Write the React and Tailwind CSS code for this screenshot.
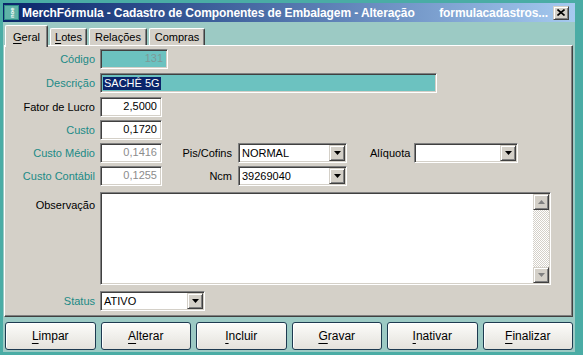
import React from "react";

const sunken =
  "border border-t-[#808080] border-l-[#808080] border-b-white border-r-white shadow-[inset_1px_1px_0_#404040,inset_-1px_-1px_0_#d4d0c8]";
const raised =
  "border border-t-[#d4d0c8] border-l-[#d4d0c8] border-b-[#404040] border-r-[#404040] shadow-[inset_1px_1px_0_#ffffff,inset_-1px_-1px_0_#808080] bg-[#d4d0c8]";

function Arrow({ up = false, color = "#000" }) {
  return (
    <svg width="7" height="4" viewBox="0 0 7 4">
      {up ? (
        <path d="M3.5 0L7 4H0z" fill={color} />
      ) : (
        <path d="M0 0h7L3.5 4z" fill={color} />
      )}
    </svg>
  );
}

function Combo({ className, value }) {
  return (
    <div className={`${sunken} ${className} bg-white h-[20px] p-[1px] flex`}>
      <div className="flex-1 pl-[2px] leading-[16px] text-black truncate">{value}</div>
      <div className={`${raised} w-[16px] flex items-center justify-center`}>
        <Arrow />
      </div>
    </div>
  );
}

function Label({ children, teal }) {
  return (
    <div className={`w-[89px] text-right ${teal ? "text-[#208a86]" : "text-black"}`}>
      {children}
    </div>
  );
}

function Btn({ first, rest }) {
  return (
    <div className="flex-1 h-[28px] rounded-[3px] border border-[#1d3a50] bg-gradient-to-b from-[#fcfcfa] to-[#e4e2dc] shadow-[inset_1px_1px_0_#ffffff] flex items-center justify-center text-[12px] text-black">
      <span>
        <span className="underline underline-offset-[3px]">{first}</span>
        {rest}
      </span>
    </div>
  );
}

export default function App() {
  return (
    <div className="w-[583px] h-[355px] bg-[#4aaca5] pt-[3px] pl-[3px] pr-[8px] pb-[3px] flex flex-col [font-family:'Liberation_Sans',Arial,sans-serif] text-[11px] overflow-hidden">
      {/* title bar */}
      <div className="h-[19px] bg-gradient-to-r from-[#0a246a] to-[#a6caf0] flex items-center text-white font-bold text-[12px] tracking-[-0.1px]">
        <svg width="15" height="15" viewBox="0 0 15 15" className="ml-[1px] shrink-0">
          <rect x="0" y="0" width="15" height="15" fill="#2f8f88" />
          <rect x="1" y="1" width="13" height="13" fill="#5fb3a8" />
          <text
            x="0"
            y="0"
            fontSize="6"
            fill="#ffffff"
            fontFamily="Liberation Sans, sans-serif"
            transform="translate(10 13) rotate(-90)"
          >
            noe
          </text>
        </svg>
        <div className="ml-[3px] whitespace-nowrap">
          MerchFórmula - Cadastro de Componentes de Embalagem - Alteração
        </div>
        <div className="flex-1" />
        <div className="whitespace-nowrap">formulacadastros...</div>
        <div className={`${raised} ml-[5px] mr-[6px] w-[16px] h-[14px] flex items-center justify-center`}>
          <svg width="8" height="7" viewBox="0 0 8 7">
            <path d="M0.5 0.5L7.5 6.5M7.5 0.5L0.5 6.5" stroke="#000" strokeWidth="1.6" />
          </svg>
        </div>
      </div>

      {/* client */}
      <div className="flex-1 bg-[#9ccac4] flex flex-col pl-[1px] pr-[2px] pb-[2px]">
        {/* tabs */}
        <div className="h-[23px] flex items-end pl-[1px] gap-[2px]">
          <div className="relative z-10 -mb-[2px] w-[43px] h-[22px] bg-[#d4d0c8] border-t border-l border-r border-t-white border-l-white border-r-[#404040] rounded-t-[2px] shadow-[inset_-1px_0_0_#808080] flex items-start justify-center pt-[3px] text-black">
            <span><span className="underline underline-offset-[2px]">G</span>eral</span>
          </div>
          <div className="w-[37px] h-[17px] bg-[#d4d0c8] border-t border-l border-r border-t-white border-l-white border-r-[#404040] rounded-t-[2px] shadow-[inset_-1px_0_0_#808080] flex items-center justify-center text-black">
            <span><span className="underline underline-offset-[2px]">L</span>otes</span>
          </div>
          <div className="w-[58px] h-[17px] bg-[#d4d0c8] border-t border-l border-r border-t-white border-l-white border-r-[#404040] rounded-t-[2px] shadow-[inset_-1px_0_0_#808080] flex items-center justify-center text-black">
            Relações
          </div>
          <div className="w-[56px] h-[17px] bg-[#d4d0c8] border-t border-l border-r border-t-white border-l-white border-r-[#404040] rounded-t-[2px] shadow-[inset_-1px_0_0_#808080] flex items-center justify-center text-black">
            Compras
          </div>
        </div>

        {/* panel */}
        <div className="h-[272px] bg-[#d4d0c8] border border-t-white border-l-white border-b-[#404040] border-r-[#404040] shadow-[inset_-1px_-1px_0_#808080] pt-[3px] pl-[1px] flex flex-col">
          <div className="flex items-center h-[20px]">
            <Label teal>Código</Label>
            <div className={`${sunken} ml-[5px] w-[68px] h-[20px] bg-[#6cc2c0] text-right pr-[4px] leading-[16px] text-[#7d9a98]`}>
              131
            </div>
          </div>
          <div className="flex items-center h-[20px] mt-[4px]">
            <Label teal>Descrição</Label>
            <div className={`${sunken} ml-[5px] w-[337px] h-[20px] bg-[#6cc2c0] pl-[2px] flex items-center`}>
              <span className="bg-[#0a246a] text-white leading-[13px] px-[1px]">SACHÊ 5G</span>
            </div>
          </div>
          <div className="flex items-center h-[20px] mt-[4px]">
            <Label>Fator de Lucro</Label>
            <div className={`${sunken} ml-[5px] w-[62px] h-[20px] bg-white text-right pr-[4px] leading-[16px] text-black`}>
              2,5000
            </div>
          </div>
          <div className="flex items-center h-[20px] mt-[3px]">
            <Label teal>Custo</Label>
            <div className={`${sunken} ml-[5px] w-[62px] h-[20px] bg-white text-right pr-[4px] leading-[16px] text-black`}>
              0,1720
            </div>
          </div>
          <div className="flex items-center h-[20px] mt-[3px]">
            <Label teal>Custo Médio</Label>
            <div className={`${sunken} ml-[5px] w-[62px] h-[20px] bg-white text-right pr-[4px] leading-[16px] text-[#8c8c8c]`}>
              0,1416
            </div>
            <div className="w-[70px] text-right text-black">Pis/Cofins</div>
            <Combo className="ml-[6px] w-[109px]" value="NORMAL" />
            <div className="ml-[23px] w-[38px] text-black">Alíquota</div>
            <Combo className="ml-[6px] w-[104px]" value="" />
          </div>
          <div className="flex items-center h-[20px] mt-[3px]">
            <Label teal>Custo Contábil</Label>
            <div className={`${sunken} ml-[5px] w-[62px] h-[20px] bg-white text-right pr-[4px] leading-[16px] text-[#8c8c8c]`}>
              0,1255
            </div>
            <div className="w-[70px] text-right text-black">Ncm</div>
            <Combo className="ml-[6px] w-[109px]" value="39269040" />
          </div>
          <div className="flex items-start mt-[6px]">
            <div className="pt-[5px]">
              <Label>Observação</Label>
            </div>
            <div className={`${sunken} ml-[5px] w-[451px] h-[93px] bg-white p-[1px] flex justify-end`}>
              <div className="w-[16px] h-full flex flex-col">
                <div className={`${raised} h-[16px] flex items-center justify-center`}>
                  <Arrow up color="#808080" />
                </div>
                <div className="flex-1 [background:repeating-conic-gradient(#d4d0c8_0_25%,#ffffff_0_50%)_0_0/2px_2px]" />
                <div className={`${raised} h-[16px] flex items-center justify-center`}>
                  <Arrow color="#808080" />
                </div>
              </div>
            </div>
          </div>
          <div className="flex items-center h-[20px] mt-[6px]">
            <Label teal>Status</Label>
            <Combo className="ml-[5px] w-[105px]" value="ATIVO" />
          </div>
        </div>

        {/* buttons */}
        <div className="mt-[5px] flex gap-[5px] pl-[1px]">
          <Btn first="L" rest="impar" />
          <Btn first="A" rest="lterar" />
          <Btn first="I" rest="ncluir" />
          <Btn first="G" rest="ravar" />
          <Btn first="I" rest="nativar" />
          <Btn first="F" rest="inalizar" />
        </div>
      </div>
    </div>
  );
}
